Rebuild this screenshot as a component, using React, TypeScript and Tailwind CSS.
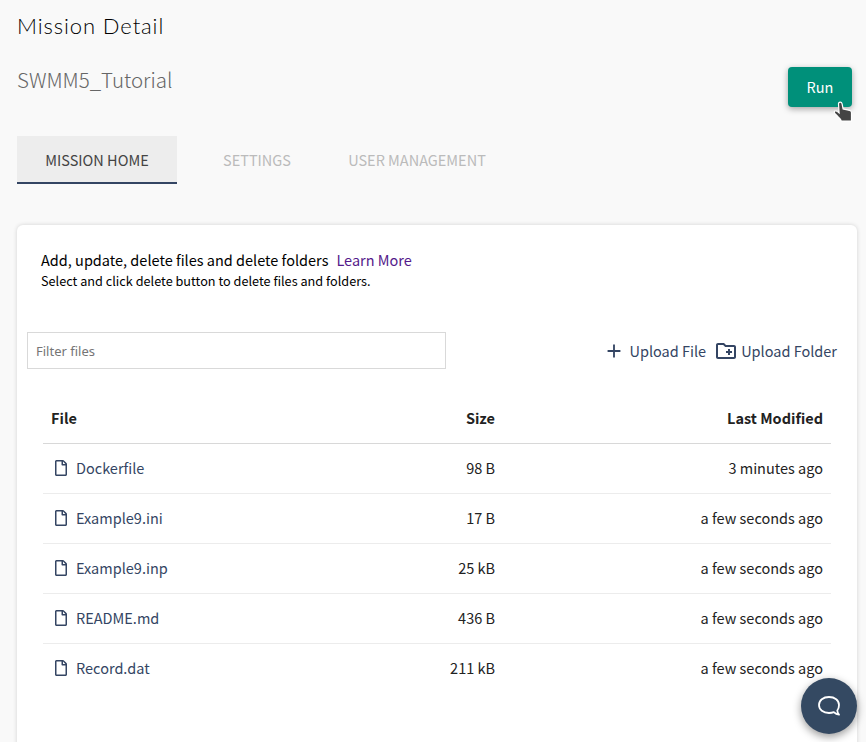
import { FaRegFile } from "react-icons/fa";
import { MdAdd, MdOutlineCreateNewFolder } from "react-icons/md";

const files = [
  { name: "Dockerfile", size: "98 B", modified: "3 minutes ago" },
  { name: "Example9.ini", size: "17 B", modified: "a few seconds ago" },
  { name: "Example9.inp", size: "25 kB", modified: "a few seconds ago" },
  { name: "README.md", size: "436 B", modified: "a few seconds ago" },
  { name: "Record.dat", size: "211 kB", modified: "a few seconds ago" },
];

function PointerCursor() {
  return (
    <svg className="absolute top-[34px] left-[45px]" width="20" height="22" viewBox="0 0 20 22">
      <path
        d="M7.2 1.2c1 0 1.7.7 1.9 1.7l1 5 6.500 1.500c1.300.3 1.900 1 1.900 2.200V20H8.200c-.5-1.800-1.700-3-3.200-4.300L1.800 12.300c-.8-.9-.6-1.900.2-2.300.8-.4 1.800-.1 2.500.6l1.600 1.300L5.500 3c-.1-1 .6-1.800 1.700-1.800z"
        fill="#444"
        stroke="#fff"
        strokeWidth="1.200"
      />
    </svg>
  );
}

export default function App() {
  return (
    <div className="relative h-[742px] w-[866px] overflow-hidden bg-[#f9f9f9] font-['Noto_Sans_CJK_SC',sans-serif] text-[14.5px] text-[#222]">
      <header className="flex h-[136px] justify-between pr-[14px] pl-[17px]">
        <div>
          <h1 className="pt-[12px] font-['Lato',sans-serif] text-[22px] leading-[28px] font-light tracking-[0.9px] text-black">Mission Detail</h1>
          <h2 className="pt-[24px] text-[20.500px] leading-[30px] font-light text-[#666]">SWMM5_Tutorial</h2>
        </div>
        <div className="relative mt-[67px] h-[40px]">
          <button className="h-[40px] w-[64px] rounded-[4px] bg-[#00907a] text-white shadow-[0_2px_6px_rgba(0,0,0,0.35)]">Run</button>
          <PointerCursor />
        </div>
      </header>
      <nav className="flex h-[48px] pl-[17px] leading-[48px] text-[#bbb]">
        <div className="w-[160px] border-b-2 border-[#344563] bg-[#ededed] text-center text-[#444]">MISSION HOME</div>
        <div className="w-[160px] text-center">SETTINGS</div>
        <div className="w-[160px] text-center">USER MANAGEMENT</div>
      </nav>
      <main className="mt-[41px] ml-[17px] h-[540px] w-[840px] rounded-[6px] bg-white shadow-[0_0_4px_rgba(0,0,0,0.16)]">
        <div className="h-[107px] pt-[24px] pl-[24px] text-black">
          <p className="flex gap-[8px] leading-[22px]">
            <span>Add, update, delete files and delete folders</span>
            <a className="text-[#551a8b]">Learn More</a>
          </p>
          <p className="text-[12.700px] leading-[20px]">Select and click delete button to delete files and folders.</p>
        </div>
        <div className="flex h-[37px] items-center justify-between pr-[20px] pl-[10px]">
          <input placeholder="Filter files" className="h-[37px] w-[419px] border border-[#d9d9d9] px-[8px] font-['Noto_Sans',sans-serif] text-[13px] placeholder:text-[#757575]" />
          <div className="flex items-center text-[#344563]">
            <MdAdd size={22} />
            <span className="ml-[4px]">Upload File</span>
            <MdOutlineCreateNewFolder size={24} className="ml-[8px]" />
            <span className="ml-[3px]">Upload Folder</span>
          </div>
        </div>
        <table className="mt-[24px] ml-[26px] w-[788px] table-fixed border-collapse">
          <thead>
            <tr className="h-[50px] border-b border-[#d8d8d8]">
              <th className="w-[300px] px-[8px] text-left">File</th>
              <th className="w-[160px] px-[8px] text-right">Size</th>
              <th className="px-[8px] text-right">Last Modified</th>
            </tr>
          </thead>
          <tbody>
            {files.map((file, index) => (
              <tr key={file.name} className={index < files.length - 1 ? "h-[50px] border-b border-[#ececec]" : "h-[50px]"}>
                <td className="px-[12px] text-[#344563]">
                  <span className="flex items-center gap-[9px]">
                    <FaRegFile size={16} className="w-[12px]" />
                    {file.name}
                  </span>
                </td>
                <td className="px-[8px] text-right">{file.size}</td>
                <td className="px-[8px] text-right">{file.modified}</td>
              </tr>
            ))}
          </tbody>
        </table>
      </main>
      <button className="absolute top-[678px] left-[801px] flex h-[56px] w-[56px] items-center justify-center rounded-full bg-[#344962] shadow-[0_3px_9px_rgba(0,0,0,0.4)]">
        <svg width="24" height="22" viewBox="0 0 24 22" fill="none" stroke="#fff" strokeWidth="1.800" strokeLinejoin="round">
          <path d="M12 2C6.200 2 2 5.400 2 10s4.200 8 10 8c1.800 0 3.400-.3 4.800-.9 1.500 1.500 3.200 2.400 5.200 2.500-1-1-1.600-2.600-1.700-4.100C21.500 14 22 12.200 22 10c0-4.600-4.200-8-10-8z" />
        </svg>
      </button>
    </div>
  );
}
